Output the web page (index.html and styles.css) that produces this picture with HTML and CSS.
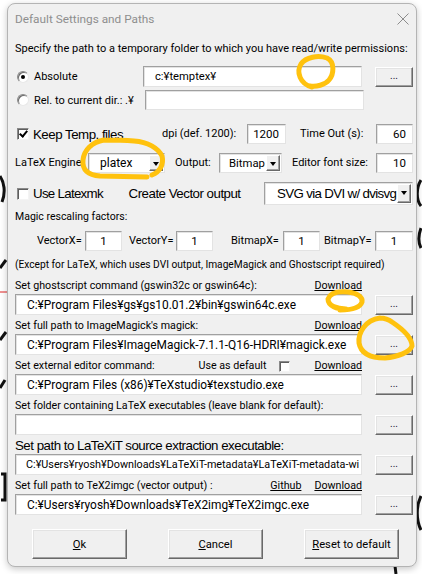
FILE: index.html
```html
<!DOCTYPE html>
<html>
<head>
<meta charset="utf-8">
<link rel="stylesheet" href="styles.css">
</head>
<body>
<svg class="bgmarks" width="422" height="574" viewBox="0 0 422 574">
  <path d="M0 176 C4 182 6 192 2 202" class="bgk"/>
  <path d="M0 268 L6 260" class="bgk"/>
  <path d="M0 292 L7 292" stroke="#e02020" stroke-width="1" fill="none"/>
  <path d="M0 340 L6 332" class="bgk"/>
  <path d="M0 388 L5 380" class="bgk"/>
  <path d="M1 474 L5 474 L5 500 L1 500" class="bgk"/>
  <path d="M421 180 C416 188 416 200 421 206" class="bgk"/>
  <path d="M421 228 C418 236 418 242 421 248" class="bgk"/>
  <path d="M421 496 C416 506 416 520 421 530" class="bgk"/>
  <path d="M395 566 L396 574" class="bgk"/>
</svg>
<div class="win">
  <div class="titlebar">
    <span class="title">Default Settings and Paths</span>
    <svg class="close" width="12" height="12" viewBox="0 0 12 12"><path d="M0.5 0.5 L11.5 11.5 M11.5 0.5 L0.5 11.5" stroke="#8c8c8c" stroke-width="1" fill="none"/></svg>
  </div>
  <div class="content">
    <div class="lbl specify">Specify the path to a temporary folder to which you have read/write permissions:</div>

    <div class="row r-abs">
      <span class="radio on"></span><span class="optlbl">Absolute</span>
      <div class="field f-abs"><span class="ftext">c:¥temptex¥</span></div>
      <div class="btn dots">...</div>
    </div>
    <div class="row r-rel">
      <span class="radio"></span><span class="optlbl">Rel. to current dir.: .¥</span>
      <div class="field f-rel"></div>
    </div>

    <div class="row r-keep">
      <span class="check on"></span><span class="big keep">Keep Temp. files</span>
      <span class="lbl dpi">dpi (def. 1200):</span>
      <div class="field num f-dpi">1200</div>
      <span class="lbl tout">Time Out (s):</span>
      <div class="field num f-small">60</div>
    </div>

    <div class="row r-engine">
      <span class="lbl eng">LaTeX Engine</span>
      <div class="combo c-eng"><span class="ctext">platex</span><span class="cbtn"></span></div>
      <span class="lbl outp">Output:</span>
      <div class="combo c-out"><span class="ctext">Bitmap</span><span class="cbtn"></span></div>
      <span class="lbl efs">Editor font size:</span>
      <div class="field num f-small">10</div>
    </div>

    <div class="row r-lmk">
      <span class="check"></span><span class="big lmk">Use Latexmk</span>
      <span class="big cvo">Create Vector output</span>
      <div class="combo c-svg"><span class="ctext">SVG via DVI w/ dvisvg</span><span class="cbtn"></span></div>
    </div>

    <div class="lbl magic">Magic rescaling factors:</div>
    <div class="row r-vec">
      <span class="lbl vx">VectorX=</span><div class="field num1">1</div>
      <span class="lbl vy">VectorY=</span><div class="field num1">1</div>
      <span class="lbl bx">BitmapX=</span><div class="field num1">1</div>
      <span class="lbl by">BitmapY=</span><div class="field num1 last">1</div>
    </div>

    <div class="small except">(Except for LaTeX, which uses DVI output, ImageMagick and Ghostscript required)</div>

    <div class="plabel first"><span>Set ghostscript command (gswin32c or gswin64c):</span><span class="links"><u>Download</u></span></div>
    <div class="prow"><div class="field path"><span class="ftext">C:¥Program Files¥gs¥gs10.01.2¥bin¥gswin64c.exe</span></div><div class="btn dots">...</div></div>

    <div class="plabel"><span>Set full path to ImageMagick's magick:</span><span class="links"><u>Download</u></span></div>
    <div class="prow"><div class="field path"><span class="ftext">C:¥Program Files¥ImageMagick-7.1.1-Q16-HDRI¥magick.exe</span></div><div class="btn dots">...</div></div>

    <div class="plabel"><span>Set external editor command:</span><span class="links"><span class="usedef">Use as default</span><span class="check small-check"></span><u>Download</u></span></div>
    <div class="prow"><div class="field path"><span class="ftext">C:¥Program Files (x86)¥TeXstudio¥texstudio.exe</span></div><div class="btn dots">...</div></div>

    <div class="plabel"><span>Set folder containing LaTeX executables (leave blank for default):</span></div>
    <div class="prow"><div class="field path"></div><div class="btn dots">...</div></div>

    <div class="plabel"><span class="big">Set path to LaTeXiT source extraction executable:</span></div>
    <div class="prow"><div class="field path"><span class="ftext sm">C:¥Users¥ryosh¥Downloads¥LaTeXiT-metadata¥LaTeXiT-metadata-wi</span></div><div class="btn dots">...</div></div>

    <div class="plabel"><span>Set full path to TeX2imgc (vector output) :</span><span class="links"><u class="gh">Github</u><u>Download</u></span></div>
    <div class="prow"><div class="field path"><span class="ftext">C:¥Users¥ryosh¥Downloads¥TeX2img¥TeX2imgc.exe</span></div><div class="btn dots">...</div></div>

    <div class="brow">
      <div class="btn big-btn"><span><u>O</u>k</span></div>
      <div class="btn big-btn"><span><u>C</u>ancel</span></div>
      <div class="btn big-btn"><span><u>R</u>eset to default</span></div>
    </div>
  </div>
</div>
<svg class="marks" width="422" height="574" viewBox="0 0 422 574">
  <path d="M312 87 C300 84 296 72 301 64 C306 57 318 55 327 58 C335 62 334 74 329 80 C325 85 316 87 310 86" class="ym"/>
  <path d="M104 140 C92 142 84 150 83 160 C82 170 88 175 100 176 L147 177 M152 175 C160 172 164 164 162 156 C158 148 148 142 134 141 C122 140 110 140 104 140" class="ym"/>
  <path d="M346 309 C337 309 328 306 328 299 C330 293 338 291 348 292 C357 293 363 297 362 302 C360 308 350 310 340 310" class="ym"/>
  <path d="M380 318 C365 320 358 333 359 343 C361 354 372 358 385 358 C398 357 410 352 412 346 C412 338 404 330 392 322 C388 319 384 318 380 318" class="ym"/>
</svg>
</body>
</html>
```
FILE: styles.css
```css
* { box-sizing: border-box; }
body {
  margin: 0;
  width: 422px;
  height: 574px;
  overflow: hidden;
  position: relative;
  background: #ffffff;
  font-family: Roboto, "Noto Sans", sans-serif;
  font-size: 11px;
  color: #000;
}
.bgmarks { position: absolute; left: 0; top: 0; }
.bgk { stroke: #111; stroke-width: 3; fill: none; }
.marks { position: absolute; left: 0; top: 0; pointer-events: none; }
.ym { stroke: #ffc20e; stroke-width: 5; fill: none; stroke-linecap: round; stroke-linejoin: round; }

.win {
  position: relative;
  margin: 3px 0 0 7px;
  width: 410px;
  height: 564px;
  border: 1px solid #b4b4b4;
  border-radius: 8px;
  background: #f0f0f0;
  box-shadow: 0 2px 7px rgba(0,0,0,0.22);
  overflow: hidden;
}
.titlebar {
  height: 30px;
  display: flex;
  align-items: center;
  padding-left: 7px;
}
.title { color: #8e8e8e; font-size: 11.8px; }
.close { margin-left: auto; margin-right: 7px; }

.content { padding: 0 3px 0 7px; }
.lbl { white-space: nowrap; line-height: 16px; }
.specify { margin-top: 7px; height: 16px; }
.big {
  font-family: "Liberation Sans", Arial, sans-serif;
  font-size: 13.3px;
  letter-spacing: -0.5px;
  white-space: nowrap;
}
.small { font-size: 10.2px; white-space: nowrap; line-height: 16px; }

.row { display: flex; align-items: center; }
.r-abs { margin-top: 9px; height: 21px; }
.r-rel { margin-top: 3px; height: 20px; }
.r-keep { margin-top: 14px; height: 20px; }
.r-engine { margin-top: 9px; height: 20px; }
.r-lmk { margin-top: 9px; height: 23px; }
.magic { margin-top: 4px; height: 16px; font-size: 10.5px; }
.r-vec { margin-top: 6px; height: 20px; }
.except { margin-top: 6px; height: 16px; }

.radio {
  width: 12px; height: 12px; border-radius: 50%;
  margin-left: 2px;
  background: #fff;
  border: 1px solid #8a8a8a;
  border-right-color: #e8e8e8;
  border-bottom-color: #e8e8e8;
  box-shadow: inset 1px 1px 0 #6a6a6a;
  position: relative;
  flex: none;
}
.radio.on::after {
  content: ""; position: absolute; left: 3px; top: 3px;
  width: 4px; height: 4px; border-radius: 50%; background: #000;
}
.optlbl { margin-left: 5px; white-space: nowrap; }
.r-abs .optlbl { width: 111px; }
.r-rel .optlbl { width: 111px; }

.check {
  width: 12px; height: 12px; flex: none;
  margin-left: 2px;
  background: #fff;
  border: 1px solid #8a8a8a;
  border-right-color: #f4f4f4;
  border-bottom-color: #f4f4f4;
  box-shadow: inset 1px 1px 0 #5e5e5e;
  position: relative;
}
.check.on::after {
  content: ""; position: absolute; left: 3px; top: 0px;
  width: 3px; height: 6px;
  border: solid #000; border-width: 0 2px 2px 0;
  transform: rotate(40deg);
}
.keep { margin-left: 4px; width: 129px; }
.dpi { width: 85px; }
.tout { margin-left: 14px; width: 71px; }
.lmk { margin-left: 4px; width: 96px; letter-spacing: -0.7px; }
.cvo { width: 136px; }

.field {
  height: 100%;
  background: #fff;
  border: 1px solid #a0a0a0;
  border-right-color: #e3e3e3;
  border-bottom-color: #e3e3e3;
  box-shadow: inset 1px 1px 0 #e3e3e3;
  display: flex;
  align-items: center;
  overflow: hidden;
  white-space: nowrap;
  flex: none;
}
.ftext { padding-left: 11px; font-size: 11.9px; }
.ftext.sm { font-size: 10.8px; padding-left: 10px; }
.f-abs { width: 219px; }
.f-abs .ftext { font-size: 11.2px; }
.f-rel { width: 219px; }
.num { justify-content: flex-end; padding-right: 6px; font-size: 11.5px; }
.f-dpi { width: 39px; }
.f-small { width: 37px; margin-left: auto; }

.btn {
  flex: none;
  background: #f0f0f0;
  border: 1px solid #fff;
  border-right-color: #696969;
  border-bottom-color: #696969;
  box-shadow: inset -1px -1px 0 #a0a0a0, inset 1px 1px 0 #e3e3e3;
  display: flex;
  align-items: center;
  justify-content: center;
}
.dots {
  width: 38px; height: 20px;
  margin-left: 13px;
  font-size: 10px;
  padding-bottom: 3px;
  color: #201030;
}

.eng { width: 73px; }
.combo {
  flex: none;
  height: 100%;
  background: #fff;
  border: 1px solid #a0a0a0;
  border-right-color: #e3e3e3;
  border-bottom-color: #e3e3e3;
  box-shadow: inset 1px 1px 0 #e3e3e3;
  display: flex;
  align-items: center;
  padding: 1px;
  white-space: nowrap;
  overflow: hidden;
}
.ctext { flex: 1; min-width: 0; overflow: hidden; padding-left: 10px; font-size: 12px; }
.cbtn {
  flex: none;
  width: 14px; height: 100%;
  background: #f0f0f0;
  border: 1px solid #fff;
  border-right-color: #696969;
  border-bottom-color: #696969;
  box-shadow: inset -1px -1px 0 #a0a0a0;
  position: relative;
}
.cbtn::after {
  content: ""; position: absolute; left: 3px; top: 6px;
  border-left: 3.5px solid transparent;
  border-right: 3.5px solid transparent;
  border-top: 4px solid #000;
}
.c-eng { width: 77px; }
.outp { margin-left: 10px; width: 44px; }
.c-out { width: 63px; }
.c-out .ctext { padding-left: 8px; font-size: 11.3px; }
.efs { margin-left: 10px; }
.c-svg { width: 149px; margin-left: 0; }
.c-svg .ctext { padding-left: 11px; font-family: "Liberation Sans", Arial, sans-serif; font-size: 13.3px; letter-spacing: -0.65px; }

.vx { margin-left: 22px; width: 48px; }
.vy { margin-left: 7px; width: 47px; }
.bx { margin-left: 18px; width: 52px; }
.by { margin-left: 4px; width: 51px; }
.num1 { width: 37px; justify-content: center; font-size: 11.5px; }
.num1.last { width: 38px; }

.plabel {
  width: 347px;
  height: 16px;
  margin-top: 3px;
  display: flex;
  align-items: center;
  justify-content: space-between;
  white-space: nowrap;
  line-height: 16px;
  font-size: 10.7px;
}
.plabel.first { margin-top: 5px; }
.links { display: flex; align-items: center; }
.links u { font-size: 10.7px; }
.gh { margin-right: 13px; }
.usedef { margin-right: 11px; }
.small-check { margin-right: 24px; width: 11px; height: 11px; }
.prow { display: flex; align-items: center; height: 21px; }
.path { width: 347px; }

.brow {
  display: flex;
  gap: 41px;
  margin-top: 14px;
  padding-left: 17px;
}
.big-btn {
  width: 95px; height: 30px;
  font-size: 11.2px;
}
```
